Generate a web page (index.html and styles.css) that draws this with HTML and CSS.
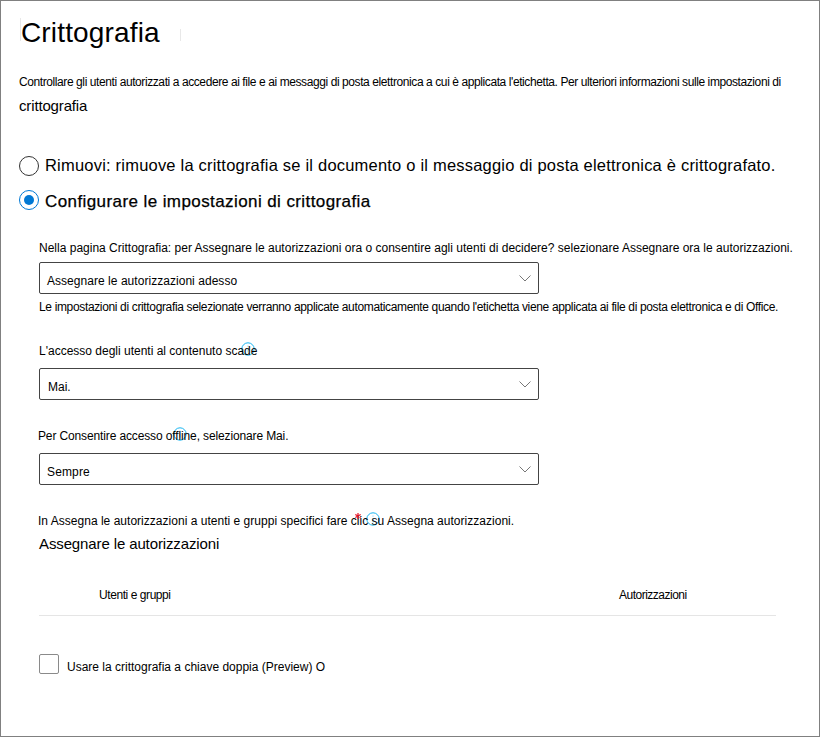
FILE: index.html
```html
<!DOCTYPE html>
<html lang="it">
<head>
<meta charset="utf-8">
<title>Crittografia</title>
<link rel="stylesheet" href="styles.css">
</head>
<body>
<main class="panel">
  <h1 class="title">Crittografia</h1>
  <p class="intro">Controllare gli utenti autorizzati a accedere ai file e ai messaggi di posta elettronica a cui è applicata l'etichetta. Per ulteriori informazioni sulle impostazioni di</p>
  <p class="intro-link">crittografia</p>
  <div class="choice choice-remove"><i class="radio"></i><span>Rimuovi: rimuove la crittografia se il documento o il messaggio di posta elettronica è crittografato.</span></div>
  <div class="choice choice-configure"><i class="radio radio-on"></i><span>Configurare le impostazioni di crittografia</span></div>
  <section class="settings">
    <p class="label label-assign">Nella pagina Crittografia: per Assegnare le autorizzazioni ora o consentire agli utenti di decidere? selezionare Assegnare ora le autorizzazioni.</p>
    <div class="select select-assign"><span>Assegnare le autorizzazioni adesso</span><svg class="chevron" viewBox="0 0 12 7"><path d="M.5.5 6 6 11.5.5"/></svg></div>
    <p class="help">Le impostazioni di crittografia selezionate verranno applicate automaticamente quando l'etichetta viene applicata ai file di posta elettronica e di Office.</p>
    <p class="label label-expiry">L'accesso degli utenti al contenuto scade<svg class="info info-expiry" viewBox="0 0 14 14"><circle cx="7" cy="7" r="6.2"/><path d="M7 3.5v1.2M7 6v4.5"/></svg></p>
    <div class="select select-expiry"><span>Mai.</span><svg class="chevron" viewBox="0 0 12 7"><path d="M.5.5 6 6 11.5.5"/></svg></div>
    <p class="label label-offline">Per Consentire accesso offline, selezionare Mai.<svg class="info info-offline" viewBox="0 0 14 14"><circle cx="7" cy="7" r="6.2"/><path d="M7 3.5v1.2M7 6v4.5"/></svg></p>
    <div class="select select-offline"><span>Sempre</span><svg class="chevron" viewBox="0 0 12 7"><path d="M.5.5 6 6 11.5.5"/></svg></div>
    <p class="label label-users">In Assegna le autorizzazioni a utenti e gruppi specifici fare clic su Assegna autorizzazioni.<svg class="required" viewBox="0 0 6 6"><path d="M3 0v6M.3 1.5l5.4 3M5.7 1.5l-5.4 3"/></svg><svg class="info info-users" viewBox="0 0 14 14"><circle cx="7" cy="7" r="6.2"/><path d="M7 3.5v1.2M7 6v4.5"/></svg></p>
    <p class="assign">Assegnare le autorizzazioni</p>
    <div class="table-head"><span class="col-users">Utenti e gruppi</span><span class="col-perms">Autorizzazioni</span></div>
    <div class="double-key"><i class="checkbox"></i><span>Usare la crittografia a chiave doppia (Preview) O</span></div>
  </section>
</main>
</body>
</html>
```
FILE: styles.css
```css
* { box-sizing: border-box; }

body {
  margin: 0;
  background: #fff;
  color: #000;
  font: 12px/20px "Liberation Sans", Arial, sans-serif;
}

h1, p { margin: 0; font-weight: 400; }

.panel {
  height: 737px;
  border: 1px solid #808080;
  padding: 14px 0 0 18px;
  white-space: nowrap;
  overflow: hidden;
}

.title {
  position: relative;
  height: 36px;
  padding-left: 2px;
  font-size: 28px;
  line-height: 36px;
  letter-spacing: .15px;
}

.title::before, .title::after {
  content: "";
  position: absolute;
  z-index: -1;
  width: 1px;
  background: #e8e8e8;
}

.title::before { left: 1px; top: 3px; height: 23px; }
.title::after { left: 161px; top: 14px; height: 12px; }

.intro { margin-top: 21px; letter-spacing: -.41px; }
.intro-link { margin-top: 4px; font-size: 15px; letter-spacing: -.15px; }

.choice { display: flex; gap: 6px; height: 20px; }
.choice-remove { margin-top: 40px; font-size: 16.5px; letter-spacing: .205px; }
.choice-remove span { margin-top: -1px; }
.choice-configure {
  margin-top: 14px;
  font-size: 17px;
  letter-spacing: .41px;
  -webkit-text-stroke: .25px #000;
}
.choice-configure span { padding-top: 2px; }

.radio {
  display: grid;
  place-items: center;
  flex: none;
  width: 20px;
  height: 20px;
  border: 1px solid #333;
  border-radius: 50%;
}
.radio-on { border-color: #0078d4; }
.radio-on::before {
  content: "";
  width: 10px;
  height: 10px;
  border-radius: 50%;
  background: #0078d4;
}

.settings { padding-left: 20px; }

.label { position: relative; height: 20px; }
.label-assign { margin-top: 28px; letter-spacing: .005px; }
.label-expiry { margin-top: 24px; }
.label-offline { margin: 26px 0 0 -1px; letter-spacing: -.13px; }
.label-users { margin: 26px 0 0 -1px; letter-spacing: .02px; }

.select {
  display: flex;
  justify-content: space-between;
  width: 500px;
  height: 32px;
  padding: 8px 7px 0;
  border: 1px solid #444;
  border-radius: 2px;
}
.select-assign { margin-top: 4px; letter-spacing: .04px; }
.select-expiry { margin-top: 7px; padding-left: 8px; }
.select-offline { margin-top: 7px; letter-spacing: .15px; }

.chevron {
  width: 12px;
  height: 7px;
  margin-top: 4px;
  fill: none;
  stroke: #777;
}

.help { margin-top: 3px; letter-spacing: -.35px; }

.info {
  position: absolute;
  z-index: -1;
  top: 1px;
  width: 14px;
  height: 14px;
  fill: none;
  stroke: #19b5f1;
}
.info path { stroke: #7fd6f8; }
.info-expiry { left: 201.5px; }
.info-offline { left: 134.5px; }
.info-users { left: 328px; }

.required {
  position: absolute;
  left: 317px;
  top: 2px;
  width: 6px;
  height: 6px;
  stroke: #e81123;
  stroke-width: 1.2;
}

.assign { margin-top: 3px; font-size: 15px; letter-spacing: -.12px; }

.table-head {
  display: grid;
  grid-template-columns: 520px 1fr;
  width: 737px;
  height: 31px;
  margin-top: 31px;
  padding-left: 60px;
  border-bottom: 1px solid #e5e5e5;
}
.col-users { letter-spacing: -.43px; }
.col-perms { letter-spacing: -.5px; }

.double-key {
  display: flex;
  gap: 8px;
  margin-top: 38px;
}
.double-key span { padding-top: 3px; }

.checkbox {
  width: 20px;
  height: 20px;
  border: 1px solid #8a8a8a;
  border-radius: 2px;
}
```
